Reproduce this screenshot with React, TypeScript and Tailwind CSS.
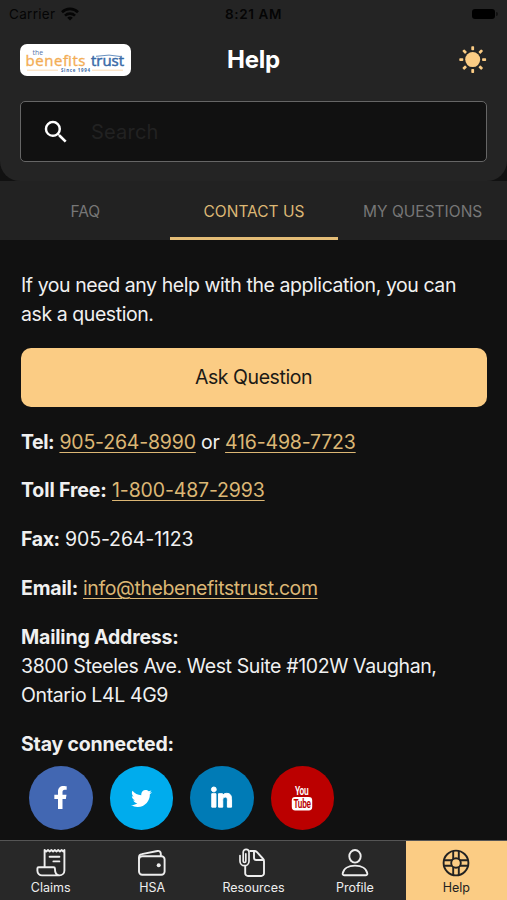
import type { ReactNode } from "react"
import { FaFacebookF, FaLinkedinIn, FaTwitter } from "react-icons/fa"
import { MdSearch } from "react-icons/md"

type NavItem = {
  label: string
  icon: ReactNode
  active?: boolean
}

const WifiIcon = () => (
  <svg width="18" height="14" viewBox="0 0 18 14" fill="none" stroke="#050505" strokeWidth="2.6">
    <path d="M1 5.2a11.4 11.4 0 0 1 16 0" />
    <path d="M4 8.6a7.2 7.2 0 0 1 10 0" />
    <path d="M9 13.6 6.2 10.8a4 4 0 0 1 5.6 0z" fill="#050505" stroke="none" />
  </svg>
)

const SunIcon = () => (
  <svg width="28" height="28" viewBox="0 0 28 28" fill="#fbcc84">
    <circle cx="13.7" cy="13.6" r="7.5" />
    {[0, 45, 90, 135, 180, 225, 270, 315].map((angle) => (
      <rect
        key={angle}
        x="12.3"
        y="0.2"
        width="2.8"
        height="4"
        rx="0.7"
        transform={`rotate(${angle} 13.7 13.6)`}
      />
    ))}
  </svg>
)

const Logo = () => (
  <svg width="111" height="32" viewBox="0 0 111 32" className="rounded-[7px] bg-white">
    <g fontFamily="'Open Sans', sans-serif">
      <text x="12.5" y="10.6" fontSize="8" fill="#5272a8" textLength="10.5" lengthAdjust="spacingAndGlyphs">the</text>
      <text x="5.5" y="22" fontSize="15" fill="#f3ad55" stroke="#f3ad55" strokeWidth="0.35" textLength="60" lengthAdjust="spacing">benefits</text>
      <text x="71" y="22" fontSize="15" fill="#3a6ba8" stroke="#3a6ba8" strokeWidth="0.5" textLength="33" lengthAdjust="spacing">trust</text>
      <text x="41" y="27.8" fontSize="4.4" fontWeight="700" fill="#3a6ba8" textLength="29" lengthAdjust="spacing">Since 1994</text>
    </g>
    <path d="M7 26.2h31M72 26.2h31" stroke="#f8cf9a" strokeWidth="0.8" />
    <path d="M76 12.3q13-2.6 26 0.4" fill="none" stroke="#6790c0" strokeWidth="1" />
  </svg>
)

const ClaimsIcon = () => (
  <svg width="30" height="30" viewBox="0 0 30 30" fill="none" stroke="currentColor" strokeWidth="1.9" strokeLinejoin="round" strokeLinecap="round">
    <path d="M8.6 19V2l1.7 1.4L12 2l1.700 1.400L15.400 2l1.700 1.400L18.800 2l1.700 1.400L22.200 2l1.700 1.400L25.600 2l1.700 1.400L28.400 2V22.400a5 5 0 0 1-5 5H6a4.600 4.600 0 0 1-4.600-4.600v-2.400a1.200 1.200 0 0 1 1.200-1.200h15a1.300 1.300 0 0 1 1.300 1.300c0 3.700 1 6.900 4.600 6.900" />
    <path d="M13.600 8.800h9.800M17.400 13.400h6" />
  </svg>
)

const WalletIcon = () => (
  <svg width="30" height="30" viewBox="0 0 30 30" fill="none" stroke="currentColor" strokeWidth="1.9" strokeLinejoin="round">
    <rect x="2" y="8.2" width="25.6" height="18.6" rx="3.2" />
    <path d="M2 11.5V9.4c0-2 1-3 2.8-3.300L20.400 3c2-.4 3.400.8 3.400 2.800v2.400" />
    <circle cx="21.7" cy="17.3" r="2" fill="currentColor" stroke="none" />
  </svg>
)

const ResourcesIcon = () => (
  <svg width="30" height="32" viewBox="0 0 30 32" fill="none" stroke="currentColor" strokeWidth="1.9" strokeLinejoin="round" strokeLinecap="round">
    <path d="M12.2 4h4.300c1.200 0 1.800.5 2.500 1.200l5.800 6.300c.8.8 1.200 1.500 1.200 2.700v12a2.800 2.800 0 0 1-2.800 2.800H10a2.800 2.800 0 0 1-2.800-2.800v-6.700" />
    <path d="M16 4.300v6.500a2.200 2.200 0 0 0 2.200 2.200h7" />
    <path d="M2 8.500v5.700a4.500 4.500 0 0 0 9 0V5.200a2.900 2.900 0 0 0-5.800 0v9a1.200 1.200 0 0 0 2.600 0V6.800" strokeWidth="1.7" />
  </svg>
)

const ProfileIcon = () => (
  <svg width="30" height="30" viewBox="0 0 30 30" fill="none" stroke="currentColor" strokeWidth="1.9" strokeLinejoin="round">
    <ellipse cx="15" cy="8.3" rx="5.7" ry="6.3" />
    <path d="M4.400 27.300c-1.200 0-1.900-.8-1.700-2 .8-4.700 5.600-7.700 12.300-7.700s11.500 3 12.300 7.700c.2 1.200-.5 2-1.700 2z" />
  </svg>
)

const HelpIcon = () => (
  <svg width="28" height="28" viewBox="0 0 28 28" fill="none" stroke="currentColor" strokeWidth="1.9">
    <circle cx="14" cy="14" r="12.4" />
    <circle cx="14" cy="14" r="4.8" />
    <path d="M11.2 2v8.1M16.8 2v8.1M11.2 17.9V26M16.8 17.9V26M2 11.2h8.1M2 16.8h8.1M17.9 11.2H26M17.9 16.8H26" />
  </svg>
)

const YoutubeIcon = () => (
  <svg width="22" height="26" viewBox="0 0 22 26" fontFamily="Roboto, sans-serif" fontWeight="600" className="overflow-visible">
    <text x="4" y="10.4" fontSize="13" fill="#fff" textLength="13.5" lengthAdjust="spacingAndGlyphs">You</text>
    <rect x="0.8" y="12" width="20.4" height="13.4" rx="3.4" fill="#fff" />
    <text x="2.4" y="23.3" fontSize="12" fill="#bb0000" textLength="17.2" lengthAdjust="spacingAndGlyphs">Tube</text>
  </svg>
)

const navItems: NavItem[] = [
  { label: "Claims", icon: <ClaimsIcon /> },
  { label: "HSA", icon: <WalletIcon /> },
  { label: "Resources", icon: <ResourcesIcon /> },
  { label: "Profile", icon: <ProfileIcon /> },
  { label: "Help", icon: <HelpIcon />, active: true },
]

const socials = [
  { name: "Facebook", color: "bg-[#4267b2]", icon: <FaFacebookF size={23} /> },
  { name: "Twitter", color: "bg-[#00aced]", icon: <FaTwitter size={21} className="mt-0.5" /> },
  { name: "LinkedIn", color: "bg-[#007bb6]", icon: <FaLinkedinIn size={23} stroke="currentColor" strokeWidth={22} className="mt-[2px] overflow-visible" /> },
  { name: "YouTube", color: "bg-[#bb0000]", icon: <YoutubeIcon /> },
]

const Link = ({ children }: { children: ReactNode }) => (
  <a href="#" className="text-[#dcb775] underline decoration-1 underline-offset-[3px]">
    {children}
  </a>
)

const Label = ({ children }: { children: ReactNode }) => (
  <b className="tracking-[-0.18px]">{children}</b>
)

const Header = () => (
  <header className="h-[181px] rounded-b-[20px] bg-[#242424]">
    <div className="grid h-7 grid-cols-3 items-center px-[9px] text-[13.5px] text-[#050505]">
      <div className="flex items-center gap-1.5 tracking-[0.3px]">
        Carrier
        <WifiIcon />
      </div>
      <div className="text-center font-semibold tracking-[0.6px]">8:21 AM</div>
      <div className="flex items-center justify-end gap-px">
        <div className="h-[10px] w-[23px] rounded-[3px] bg-black" />
        <div className="h-1 w-0.5 rounded-r bg-[#111]" />
      </div>
    </div>
    <div className="grid h-16 grid-cols-3 items-center px-5">
      <Logo />
      <h1 className="text-center text-[24px] font-bold tracking-[-0.2px] text-white">Help</h1>
      <div className="flex justify-end">
        <SunIcon />
      </div>
    </div>
    <div className="mx-5 mt-[9px] flex h-[61px] items-center rounded-[5px] border border-[#666] bg-[#111]">
      <MdSearch size={30} className="ml-[20px] text-white" />
      <input
        placeholder="Search"
        className="ml-[20px] w-60 bg-transparent text-[20px] tracking-[0.2px] outline-none placeholder:text-[#222]"
      />
    </div>
  </header>
)

const Tabs = () => (
  <div className="grid h-[59px] grid-cols-3 bg-[#222] pl-px text-[15.5px] text-[#777]">
    <button className="border-b-[3px] border-transparent pt-[5px]">FAQ</button>
    <button className="border-b-[3px] border-[#e4bd77] pt-[5px] text-[#dcb775]">CONTACT US</button>
    <button className="border-b-[3px] border-transparent pt-[5px]">MY QUESTIONS</button>
  </div>
)

export default function App() {
  return (
    <div className="flex h-[900px] w-[507px] flex-col overflow-hidden bg-[#111] font-[Inter,sans-serif]">
      <Header />
      <Tabs />

      <main className="flex flex-1 flex-col gap-[19.5px] px-[21px] pt-[31px] text-[19.5px] leading-[29.25px] tracking-[-0.43px] text-[#f0f0f0]">
        <p>
          If you need any help with the application, you can
          <br />
          ask a question.
        </p>
        <button className="-mx-[0.5px] -mt-px mb-[1.7px] h-[58.5px] shrink-0 rounded-[10px] bg-[#fbcc84] text-[#1c1a16]">
          Ask Question
        </button>
        <p className="tracking-[-0.19px]">
          <b className="tracking-[-0.45px]">Tel:</b> <Link>905-264-8990</Link> or <Link>416-498-7723</Link>
        </p>
        <p className="tracking-[-0.15px]"><b className="tracking-[-0.12px]">Toll Free:</b> <Link>1-800-487-2993</Link></p>
        <p className="tracking-[-0.12px]"><b className="tracking-[-0.4px]">Fax:</b> 905-264-1123</p>
        <p className="tracking-[-0.41px]"><Label>Email:</Label> <Link>info@thebenefitstrust.com</Link></p>
        <p className="tracking-[-0.38px]">
          <Label>Mailing Address:</Label>
          <br />
          3800 Steeles Ave. West Suite #102W Vaughan,
          <br />
          Ontario L4L 4G9
        </p>
        <div>
          <Label>Stay connected:</Label>
          <div className="mt-[7px] ml-2 flex gap-[17px]">
            {socials.map((social) => (
              <a
                key={social.name}
                href="#"
                aria-label={social.name}
                className={`flex size-[63.5px] items-center justify-center rounded-full text-white ${social.color}`}
              >
                {social.icon}
              </a>
            ))}
          </div>
        </div>
      </main>

      <nav className="grid h-[60px] shrink-0 grid-cols-5 border-t border-[#555] bg-[#282828] text-[12.5px]">
        {navItems.map((item) => (
          <a
            key={item.label}
            href="#"
            className={`flex flex-col items-center pt-[6px] leading-4 ${
              item.active ? "bg-[#fbcc84] text-[#222]" : "text-[#eee]"
            }`}
          >
            <span className="flex h-[31px] items-center">{item.icon}</span>
            <span className="mt-[2px]">{item.label}</span>
          </a>
        ))}
      </nav>
    </div>
  )
}
